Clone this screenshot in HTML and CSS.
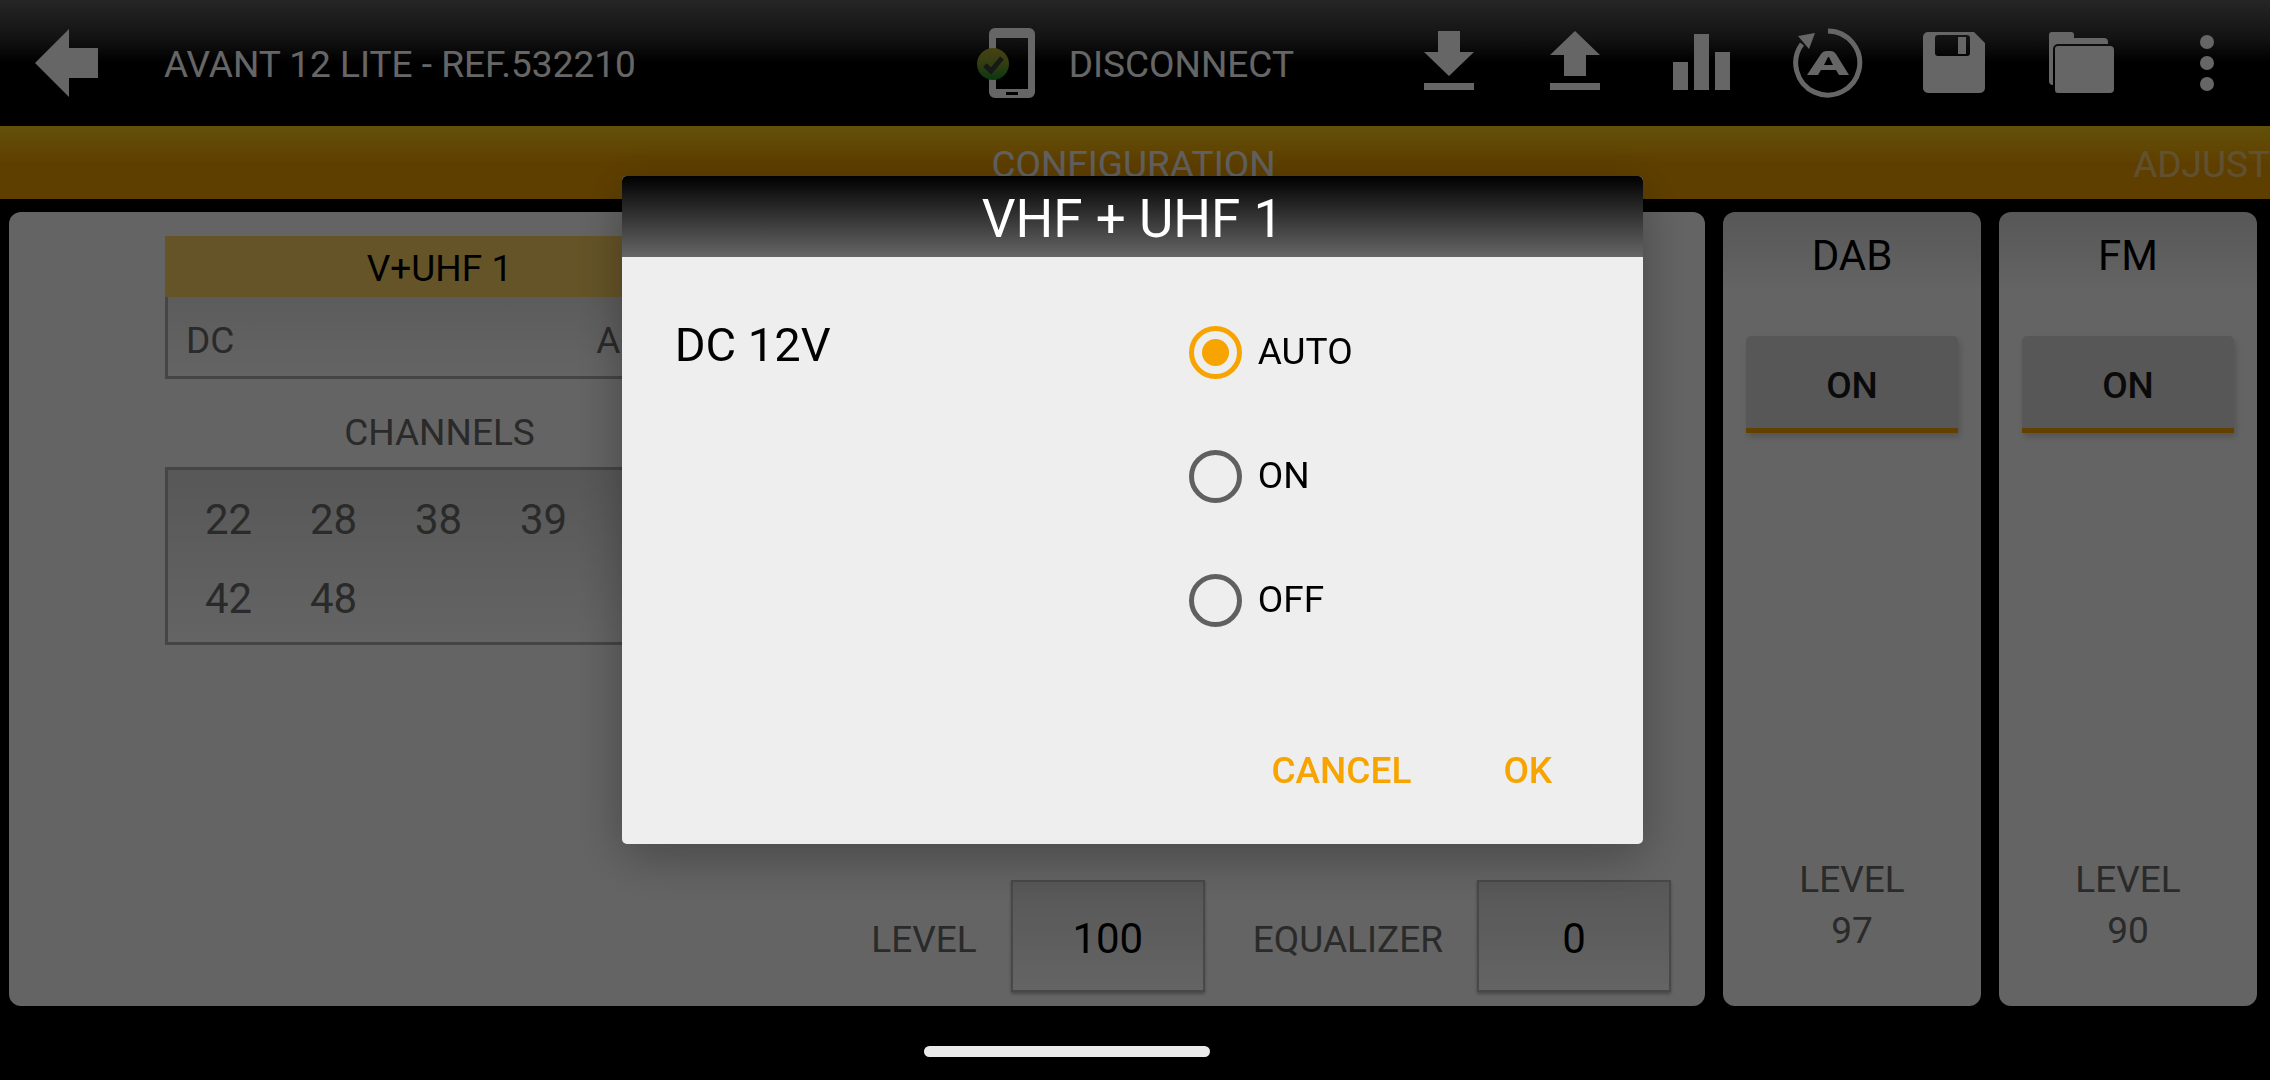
FILE: index.html
```html
<!DOCTYPE html>
<html lang="en">
<head>
<meta charset="utf-8">
<meta name="viewport" content="width=device-width, initial-scale=1">
<title>Avant 12 Lite</title>
<link rel="stylesheet" href="styles.css">
</head>
<body>
<div class="app">
  <header class="toolbar">
    <button class="back" type="button" aria-label="Back">
      <svg width="64" height="70" viewBox="0 0 64 70"><path d="M1 35 35 1V20H64V50H35V69Z" fill="currentColor"/></svg>
    </button>
    <h1 class="toolbar-title">AVANT 12 LITE - REF.532210</h1>
    <button class="connection" type="button">
      <svg width="58" height="72" viewBox="0 0 58 72">
        <defs><linearGradient id="status" x1="0" y1="0" x2="0" y2="1"><stop offset="0" stop-color="#b4a530"/><stop offset="0.5" stop-color="#7c9a2c"/><stop offset="1" stop-color="#178a30"/></linearGradient></defs>
        <path fill="currentColor" fill-rule="evenodd" d="M18 1H52a6 6 0 0 1 6 6V65a6 6 0 0 1-6 6H18a6 6 0 0 1-6-6V7a6 6 0 0 1 6-6ZM19 11V62H51V11ZM29 65V68H41V65Z"/>
        <circle cx="16" cy="37" r="16" fill="url(#status)"/>
        <path d="m8 38 6 6 11-13" fill="none" stroke="#3c3c3c" stroke-width="5"/>
      </svg>
      <span>DISCONNECT</span>
    </button>
    <nav class="actions" aria-label="Actions">
      <button class="action" type="button" aria-label="Download">
        <svg width="70" height="70" viewBox="0 0 70 70"><path d="M24 3H46V24H60L35 48 10 24H24ZM10 55H60V62H10Z" fill="currentColor"/></svg>
      </button>
      <button class="action" type="button" aria-label="Upload">
        <svg width="70" height="70" viewBox="0 0 70 70"><path d="M24 48V27H10L35 3 60 27H46V48ZM10 55H60V62H10Z" fill="currentColor"/></svg>
      </button>
      <button class="action" type="button" aria-label="Measurements">
        <svg width="70" height="70" viewBox="0 0 70 70"><path d="M6 34H21V62H6ZM27 6H42V62H27ZM48 24H63V62H48Z" fill="currentColor"/></svg>
      </button>
      <button class="action" type="button" aria-label="Automatic adjustment">
        <svg width="70" height="70" viewBox="0 0 70 70"><path d="M35 3A32 32 0 1 1 9 16" fill="none" stroke="currentColor" stroke-width="5"/><path d="M5 8 22 5 16 21Z" fill="currentColor"/><path fill="currentColor" fill-rule="evenodd" d="M14 47 28 26Q30 23 33 23H38Q41 23 43 26L56 47H46L43 42H28L25 47ZM31 37H40L36 29H35Z"/></svg>
      </button>
      <button class="action" type="button" aria-label="Save">
        <svg width="70" height="70" viewBox="0 0 70 70"><path fill="currentColor" fill-rule="evenodd" d="M9 4H55L66 15V60a5 5 0 0 1-5 5H9a5 5 0 0 1-5-5V9a5 5 0 0 1 5-5ZM19 7a3 3 0 0 0-3 3V25a3 3 0 0 0 3 3H48a3 3 0 0 0 3-3V10a3 3 0 0 0-3-3ZM39 9H47V26H39Z"/></svg>
      </button>
      <button class="action" type="button" aria-label="Open">
        <svg width="70" height="70" viewBox="0 0 70 70"><path fill="currentColor" d="M6 4H25a3 3 0 0 1 3 3V10H58a4 4 0 0 1 4 4V16H12a5 5 0 0 0-5 5V57a4 4 0 0 1-4-4V7a3 3 0 0 1 3-3ZM12 18H64a4 4 0 0 1 4 4V61a4 4 0 0 1-4 4H12a3 3 0 0 1-3-3V21a3 3 0 0 1 3-3Z"/></svg>
      </button>
      <button class="action" type="button" aria-label="More options">
        <svg width="70" height="70" viewBox="0 0 70 70" fill="currentColor"><circle cx="35" cy="14" r="7"/><circle cx="35" cy="35" r="7"/><circle cx="35" cy="56" r="7"/></svg>
      </button>
    </nav>
  </header>

  <nav class="tabs" aria-label="Sections">
    <a class="tab tab-current" href="#configuration" aria-current="page">CONFIGURATION</a>
    <a class="tab tab-next" href="#adjust">ADJUST</a>
  </nav>

  <main class="panels" id="configuration">
    <section class="panel panel-main">
      <div class="input-block">
        <h2 class="input-name">V+UHF 1</h2>
        <div class="dc-row"><span>DC</span><span class="dc-value">AUTO</span></div>
        <h3 class="channels-title">CHANNELS</h3>
        <ul class="channels">
          <li>22</li><li>28</li><li>38</li><li>39</li><li></li><li>42</li><li>48</li>
        </ul>
      </div>
      <div class="outputs">
        <label for="level">LEVEL</label>
        <input class="value" id="level" type="text" value="100">
        <label for="equalizer">EQUALIZER</label>
        <input class="value" id="equalizer" type="text" value="0">
      </div>
    </section>
    <section class="panel panel-side">
      <h2 class="side-title">DAB</h2>
      <button class="toggle" type="button">ON</button>
      <p class="side-level">LEVEL<br>97</p>
    </section>
    <section class="panel panel-side">
      <h2 class="side-title">FM</h2>
      <button class="toggle" type="button">ON</button>
      <p class="side-level">LEVEL<br>90</p>
    </section>
  </main>
</div>

<div class="scrim">
  <form class="dialog" role="dialog" aria-labelledby="dialog-title">
    <h2 class="dialog-title" id="dialog-title">VHF + UHF 1</h2>
    <fieldset class="dialog-body">
      <legend class="dc-label">DC 12V</legend>
      <div class="options">
        <label class="option"><input type="radio" name="dc" checked>AUTO</label>
        <label class="option"><input type="radio" name="dc">ON</label>
        <label class="option"><input type="radio" name="dc">OFF</label>
      </div>
    </fieldset>
    <div class="dialog-actions">
      <button class="text-button" type="button">CANCEL</button>
      <button class="text-button" type="button">OK</button>
    </div>
  </form>
  <div class="home-bar"></div>
</div>
</body>
</html>
```
FILE: styles.css
```css
* {
  box-sizing: border-box;
}

body,
h1,
h2,
h3,
p,
ul,
fieldset,
legend {
  margin: 0;
  padding: 0;
  border: 0;
  font-size: inherit;
  font-weight: 400;
}

body {
  background: #000;
  color: #696969;
  font: 400 37px/44px Roboto, sans-serif;
}

button,
input {
  margin: 0;
  padding: 0;
  border: 0;
  background: none;
  color: inherit;
  font: inherit;
}

svg {
  display: block;
}

.app {
  display: flex;
  flex-direction: column;
  min-height: 100vh;
  padding-bottom: 74px;
}

/* Toolbar */

.toolbar {
  display: flex;
  align-items: center;
  height: 126px;
  background: linear-gradient(#5e5e5e, #303030 30%, #000 50%);
  color: #fff;
}

.back {
  padding: 0 34px;
}

.toolbar-title {
  flex: 1;
  padding: 3px 0 0 32px;
  white-space: nowrap;
}

.connection {
  display: flex;
  align-items: center;
  gap: 34px;
  margin-right: 92px;
}

.connection span {
  padding-top: 3px;
}

.actions {
  display: flex;
  width: 884px;
}

.action {
  display: flex;
  flex: 1;
  justify-content: center;
}

/* Section tabs */

.tabs {
  display: grid;
  grid-template-columns: 1fr auto 1fr;
  align-items: center;
  height: 73px;
  padding-top: 4px;
  background: linear-gradient(#f8ca1a, #ee9f00 50%);
}

.tab {
  color: #f4f4f4;
  text-decoration: none;
}

.tab-current {
  grid-column: 2;
  padding-right: 3px;
}

.tab-next {
  justify-self: end;
  opacity: 0.5;
}

/* Panels */

.panels {
  display: flex;
  flex: 1;
  gap: 18px;
  padding: 13px 13px 0 9px;
}

.panel {
  display: flex;
  flex-direction: column;
  border-radius: 12px;
  background: #fafafa;
}

.panel-main {
  flex: 1;
  justify-content: space-between;
  padding: 24px 34px 14px 156px;
}

.input-block {
  width: 549px;
}

.input-name {
  padding: 11px 0 6px;
  background: #fdd264;
  color: #000;
  text-align: center;
}

.dc-row {
  display: flex;
  justify-content: space-between;
  padding: 22px 20px 13px 18px;
  border: 3px solid #acacac;
  border-top: 0;
  background: linear-gradient(#e6e6e6, #fafafa);
}

.channels-title {
  padding: 32px 0 12px;
  text-align: center;
}

.channels {
  display: grid;
  grid-template-columns: repeat(5, 105px);
  padding: 10px 8px 4px;
  border: 3px solid #acacac;
  background: linear-gradient(#dadada, #fafafa);
  font-size: 42px;
  line-height: 79px;
  list-style: none;
  text-align: center;
}

.outputs {
  display: flex;
  align-items: center;
  justify-content: flex-end;
}

.outputs label {
  padding-top: 8px;
}

.value {
  width: 194px;
  height: 112px;
  margin-left: 34px;
  padding-top: 4px;
  border: 2px solid #b4b4b4;
  background: linear-gradient(#dadada, #fafafa);
  box-shadow: 0 2px 3px #b4b4b4;
  color: #000;
  font-size: 42px;
  text-align: center;
}

.value + label {
  margin-left: 48px;
}

/* DAB and FM panels */

.panel-side {
  width: 258px;
  padding: 20px 23px 50px;
  background: linear-gradient(#dadada, #fafafa 10%);
  text-align: center;
}

.side-title {
  color: #000;
  font-size: 42px;
  line-height: 48px;
}

.toggle {
  height: 97px;
  margin-top: 56px;
  padding-top: 8px;
  border-bottom: 5px solid #f5a400;
  border-radius: 5px 5px 0 0;
  background: #d9d9d9;
  box-shadow: 2px 4px 6px #d0d0d0;
  color: #1a1a1a;
  font-weight: 500;
}

.side-level {
  margin-top: auto;
  line-height: 51px;
}

/* Dialog layer */

.scrim {
  position: fixed;
  inset: 0;
  display: flex;
  flex-direction: column;
  align-items: center;
  justify-content: space-between;
  padding: 176px 5px 23px 0;
  background: rgba(0, 0, 0, 0.6);
}

.dialog {
  width: 45vw;
  overflow: hidden;
  border-radius: 5px;
  background: #eee;
  box-shadow: 0 12px 50px rgba(0, 0, 0, 0.3);
  color: #000;
}

.dialog-title {
  padding: 11px 0 6px;
  background: linear-gradient(#000, #666);
  color: #fff;
  font-size: 53px;
  line-height: 64px;
  text-align: center;
}

.dialog-body {
  display: grid;
  grid-template-columns: 514px 1fr;
  padding: 58px 0 0 53px;
}

.dc-label {
  float: left;
  font-size: 47px;
  line-height: 60px;
}

.options {
  grid-column: 2;
  display: flex;
  flex-direction: column;
  align-items: flex-start;
  gap: 50px;
}

.option {
  display: flex;
  align-items: center;
  gap: 16px;
  height: 74px;
}

.option input {
  appearance: none;
  width: 53px;
  height: 53px;
  border: 5px solid #606060;
  border-radius: 50%;
}

.option input:checked {
  border-color: #f7a400;
  background: radial-gradient(circle, #f7a400 13px, transparent 14px);
}

.dialog-actions {
  display: flex;
  justify-content: flex-end;
  gap: 92px;
  padding: 112px 91px 51px;
}

.text-button {
  color: #f7a400;
  font-weight: 500;
}

.home-bar {
  width: 286px;
  height: 11px;
  margin-right: 132px;
  border-radius: 6px;
  background: #ebebeb;
}
```
